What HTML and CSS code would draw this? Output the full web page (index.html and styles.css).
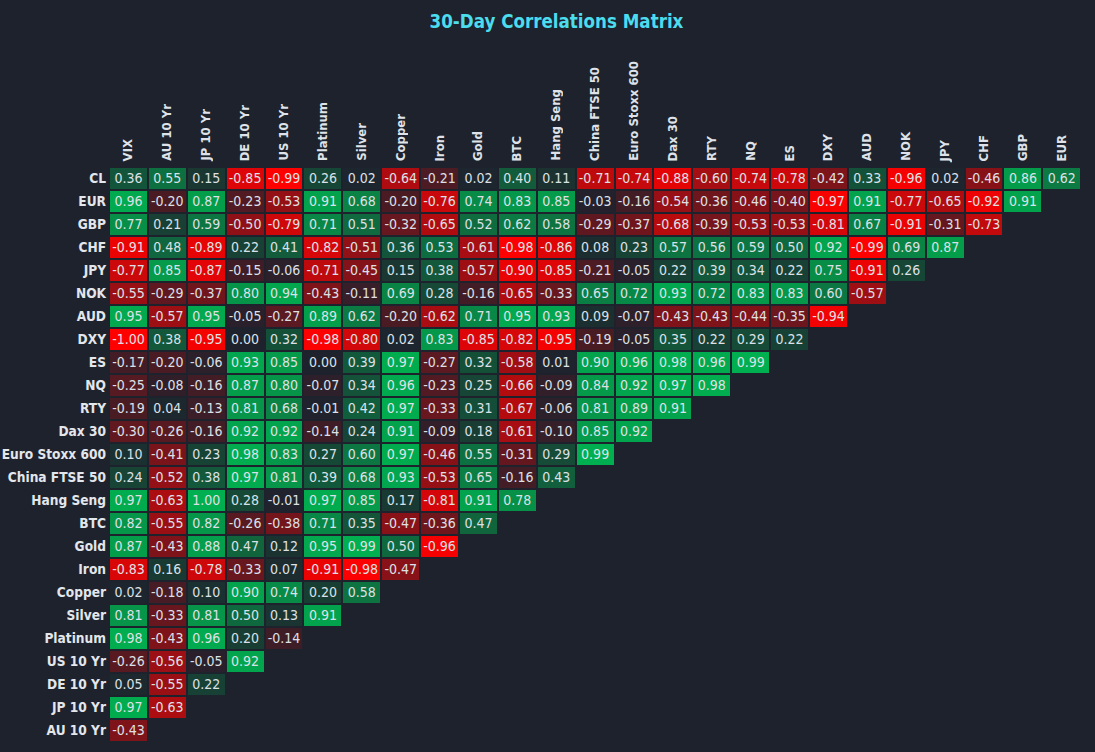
FILE: index.html
```html
<!DOCTYPE html>
<html lang="en">
<head>
<meta charset="utf-8">
<title>30-Day Correlations Matrix</title>
<link rel="stylesheet" href="styles.css">
</head>
<body>
<div class="page">
  <h1 class="title">30-Day Correlations Matrix</h1>
  <div class="heads" id="heads"><div class="corner"></div></div>
  <div class="matrix" id="matrix"></div>
</div>
<script src="script.js"></script>
</body>
</html>
```

FILE: styles.css
```css
html, body {
  margin: 0;
  padding: 0;
  background: #1e222d;
}
body {
  font-family: "DejaVu Sans Condensed", "DejaVu Sans", "Liberation Sans", sans-serif;
  font-stretch: condensed;
  color: #dde1e7;
}
.page {
  width: 1095px;
  height: 752px;
  overflow: hidden;
}
.title {
  margin: 0;
  height: 44px;
  line-height: 44px;
  text-align: center;
  padding-left: 18px;
  font-size: 18.6px;
  font-weight: bold;
  color: #4bdcee;
}
.heads {
  display: grid;
  grid-template-columns: 108px repeat(25, 36.9px);
  column-gap: 2px;
  height: 117px;
  margin-bottom: 7px;
  align-items: end;
}
.head {
  justify-self: center;
  writing-mode: vertical-rl;
  transform: rotate(180deg);
  font-size: 13px;
  font-weight: bold;
  line-height: 16px;
  white-space: nowrap;
  color: #dfe2e8;
}
.matrix {
  display: grid;
  grid-template-columns: 108px repeat(25, 36.9px);
  grid-auto-rows: 21px;
  column-gap: 2px;
  row-gap: 2px;
}
.label {
  grid-column: 1;
  text-align: right;
  padding-right: 2px;
  font-size: 13.6px;
  font-weight: bold;
  line-height: 21px;
  white-space: nowrap;
  color: #e3e6eb;
}
.cell {
  text-align: center;
  font-size: 14px;
  line-height: 21px;
  color: #dde1e7;
  white-space: nowrap;
}
```

FILE: script.js
```js
(function () {
  var cols = ["VIX","AU 10 Yr","JP 10 Yr","DE 10 Yr","US 10 Yr","Platinum","Silver","Copper","Iron","Gold","BTC","Hang Seng","China FTSE 50","Euro Stoxx 600","Dax 30","RTY","NQ","ES","DXY","AUD","NOK","JPY","CHF","GBP","EUR"];
  var rows = [
    ["CL",[0.36,0.55,0.15,-0.85,-0.99,0.26,0.02,-0.64,-0.21,0.02,0.40,0.11,-0.71,-0.74,-0.88,-0.60,-0.74,-0.78,-0.42,0.33,-0.96,0.02,-0.46,0.86,0.62]],
    ["EUR",[0.96,-0.20,0.87,-0.23,-0.53,0.91,0.68,-0.20,-0.76,0.74,0.83,0.85,-0.03,-0.16,-0.54,-0.36,-0.46,-0.40,-0.97,0.91,-0.77,-0.65,-0.92,0.91]],
    ["GBP",[0.77,0.21,0.59,-0.50,-0.79,0.71,0.51,-0.32,-0.65,0.52,0.62,0.58,-0.29,-0.37,-0.68,-0.39,-0.53,-0.53,-0.81,0.67,-0.91,-0.31,-0.73]],
    ["CHF",[-0.91,0.48,-0.89,0.22,0.41,-0.82,-0.51,0.36,0.53,-0.61,-0.98,-0.86,0.08,0.23,0.57,0.56,0.59,0.50,0.92,-0.99,0.69,0.87]],
    ["JPY",[-0.77,0.85,-0.87,-0.15,-0.06,-0.71,-0.45,0.15,0.38,-0.57,-0.90,-0.85,-0.21,-0.05,0.22,0.39,0.34,0.22,0.75,-0.91,0.26]],
    ["NOK",[-0.55,-0.29,-0.37,0.80,0.94,-0.43,-0.11,0.69,0.28,-0.16,-0.65,-0.33,0.65,0.72,0.93,0.72,0.83,0.83,0.60,-0.57]],
    ["AUD",[0.95,-0.57,0.95,-0.05,-0.27,0.89,0.62,-0.20,-0.62,0.71,0.95,0.93,0.09,-0.07,-0.43,-0.43,-0.44,-0.35,-0.94]],
    ["DXY",[-1.00,0.38,-0.95,0.00,0.32,-0.98,-0.80,0.02,0.83,-0.85,-0.82,-0.95,-0.19,-0.05,0.35,0.22,0.29,0.22]],
    ["ES",[-0.17,-0.20,-0.06,0.93,0.85,0.00,0.39,0.97,-0.27,0.32,-0.58,0.01,0.90,0.96,0.98,0.96,0.99]],
    ["NQ",[-0.25,-0.08,-0.16,0.87,0.80,-0.07,0.34,0.96,-0.23,0.25,-0.66,-0.09,0.84,0.92,0.97,0.98]],
    ["RTY",[-0.19,0.04,-0.13,0.81,0.68,-0.01,0.42,0.97,-0.33,0.31,-0.67,-0.06,0.81,0.89,0.91]],
    ["Dax 30",[-0.30,-0.26,-0.16,0.92,0.92,-0.14,0.24,0.91,-0.09,0.18,-0.61,-0.10,0.85,0.92]],
    ["Euro Stoxx 600",[0.10,-0.41,0.23,0.98,0.83,0.27,0.60,0.97,-0.46,0.55,-0.31,0.29,0.99]],
    ["China FTSE 50",[0.24,-0.52,0.38,0.97,0.81,0.39,0.68,0.93,-0.53,0.65,-0.16,0.43]],
    ["Hang Seng",[0.97,-0.63,1.00,0.28,-0.01,0.97,0.85,0.17,-0.81,0.91,0.78]],
    ["BTC",[0.82,-0.55,0.82,-0.26,-0.38,0.71,0.35,-0.47,-0.36,0.47]],
    ["Gold",[0.87,-0.43,0.88,0.47,0.12,0.95,0.99,0.50,-0.96]],
    ["Iron",[-0.83,0.16,-0.78,-0.33,0.07,-0.91,-0.98,-0.47]],
    ["Copper",[0.02,-0.18,0.10,0.90,0.74,0.20,0.58]],
    ["Silver",[0.81,-0.33,0.81,0.50,0.13,0.91]],
    ["Platinum",[0.98,-0.43,0.96,0.20,-0.14]],
    ["US 10 Yr",[-0.26,-0.56,-0.05,0.92]],
    ["DE 10 Yr",[0.05,-0.55,0.22]],
    ["JP 10 Yr",[0.97,-0.63]],
    ["AU 10 Yr",[-0.43]]
  ];
  var base = [30, 34, 45], pos = [0, 176, 80], neg = [255, 0, 0];
  function color(v) {
    var t = Math.min(1, Math.abs(v)), end = v >= 0 ? pos : neg, c = [];
    for (var i = 0; i < 3; i++) c.push(Math.round(base[i] * (1 - t) + end[i] * t));
    return "rgb(" + c.join(",") + ")";
  }
  var heads = document.getElementById("heads");
  cols.forEach(function (name) {
    var d = document.createElement("div");
    d.className = "head";
    d.textContent = name;
    heads.appendChild(d);
  });
  var m = document.getElementById("matrix");
  rows.forEach(function (r, ri) {
    var l = document.createElement("div");
    l.className = "label";
    l.textContent = r[0];
    l.style.gridRow = String(ri + 1);
    m.appendChild(l);
    r[1].forEach(function (v, ci) {
      var c = document.createElement("div");
      c.className = "cell";
      c.textContent = v.toFixed(2);
      c.style.gridRow = String(ri + 1);
      c.style.gridColumn = String(ci + 2);
      c.style.background = color(v);
      m.appendChild(c);
    });
  });
})();
```
